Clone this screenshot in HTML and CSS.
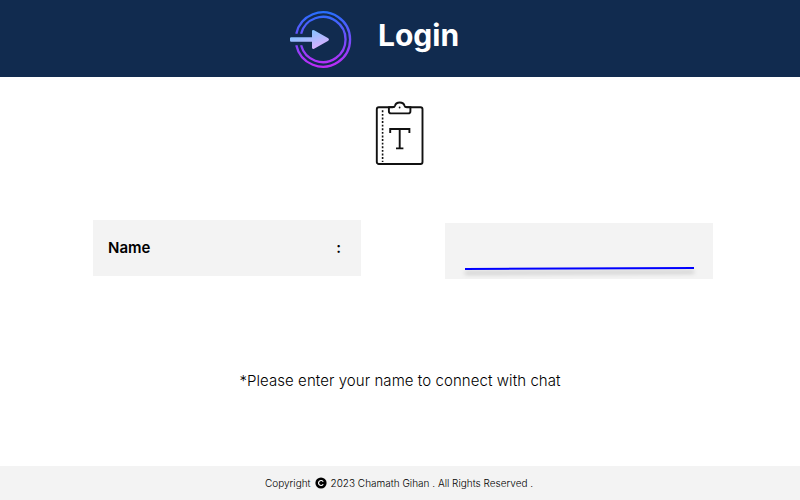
FILE: index.html
```html
<!DOCTYPE html>
<html lang="en">
<head>
<meta charset="utf-8">
<title>Login</title>
<link rel="stylesheet" href="styles.css">
</head>
<body>
<header class="header">
  <svg class="login-icon" width="64" height="60" viewBox="0 0 64 60" fill="none">
    <defs>
      <linearGradient id="ring" gradientUnits="userSpaceOnUse" x1="0" y1="1" x2="0" y2="58">
        <stop offset="0" stop-color="#2470ff"/>
        <stop offset="1" stop-color="#c22af8"/>
      </linearGradient>
      <linearGradient id="arrow" gradientUnits="userSpaceOnUse" x1="24" y1="20" x2="30" y2="39">
        <stop offset="0" stop-color="#83c2ff"/>
        <stop offset="1" stop-color="#dfafff"/>
      </linearGradient>
    </defs>
    <g stroke="url(#ring)" stroke-width="2.3">
      <path d="M8.3 23.7A27.2 27.2 0 1 1 8.3 35.3"/>
      <path d="M13.1 23.7A22.6 22.6 0 1 1 13.1 35.3"/>
    </g>
    <path d="M3.2 27.2H24V21.5Q24 19.4 26.1 20.3L40.3 28.3Q41.7 29.5 40.3 30.7L26.1 38.7Q24 39.6 24 37.5V31.8H3.2Q2 31.8 2 30.6V28.4Q2 27.2 3.2 27.2Z" fill="url(#arrow)"/>
  </svg>
  <h1 class="title">Login</h1>
</header>
<main class="main">
  <svg class="clipboard" width="50" height="66" viewBox="0 0 50 66" fill="none" stroke="#111" stroke-width="1.9">
    <rect x="1.8" y="7.3" width="45.7" height="56.7" rx="2"/>
    <path d="M13.2 7.3H17.5Q19.6 7.3 20 5.8C21 1.3 28.5 1.3 29.5 5.8Q29.9 7.3 31.9 7.3H35.4V11.2Q35.4 13.4 33.2 13.4H16.1Q13.9 13.4 13.9 11.2V7.3" fill="#fff"/>
    <circle cx="24.6" cy="7.5" r=".9" fill="#111" stroke="none"/>
    <path d="M7.6 10.3V62" stroke-width="1.6" stroke-dasharray="1.9 1.7"/>
    <path d="M15.2 33V29H34.4V33M24.7 29V48.2M21 48.4H28.4"/>
  </svg>
  <form class="fields">
    <div class="label"><span>Name</span><span>:</span></div>
    <div class="entry">
      <svg class="underline" width="229" height="4" viewBox="0 0 229 4"><path d="M0 3L229 2" stroke="#00f" stroke-width="2"/></svg>
    </div>
  </form>
  <p class="hint">*Please enter your name to connect with chat</p>
</main>
<footer class="footer">
  <span>Copyright</span>
  <svg class="copy-icon" width="12" height="12" viewBox="0 0 12 12"><circle cx="6" cy="6" r="5.6"/><path d="M8.2 4.7A2.5 2.5 0 1 0 8.2 7.3" fill="none" stroke="#fff" stroke-width="1.2"/></svg>
  <span>2023 Chamath Gihan . All Rights Reserved .</span>
</footer>
</body>
</html>
```
FILE: styles.css
```css
* { box-sizing: border-box; }
body {
  display: flex;
  flex-direction: column;
  height: 500px;
  margin: 0;
  background: #fff;
  color: #000;
  font-family: Inter, sans-serif;
}
.header {
  display: flex;
  align-items: flex-start;
  height: 77px;
  padding-left: 288px;
  background: #112b4f;
}
.login-icon { margin-top: 10px; }
.title {
  margin: 17px 0 0 26px;
  color: #fff;
  font-size: 30px;
  font-weight: 700;
  line-height: 36px;
}
.main {
  display: flex;
  flex: 1;
  flex-direction: column;
  align-items: center;
}
.clipboard { margin-top: 23px; }
.fields {
  display: flex;
  align-items: flex-start;
  gap: 84px;
  width: 620px;
  margin: 54px 0 0 6px;
}
.label, .entry {
  display: flex;
  width: 268px;
  height: 56px;
  background: #f3f3f3;
}
.label {
  align-items: center;
  justify-content: space-between;
  padding: 0 20px 2px 15px;
  font-size: 15px;
  font-weight: 600;
}
.entry {
  margin-top: 3px;
  padding: 43px 0 0 20px;
}
.underline {
  overflow: visible;
  filter: drop-shadow(0 4px 2px rgba(0, 0, 0, .25));
}
.hint {
  margin: 92px 0 0;
  font-size: 15px;
  font-weight: 300;
  line-height: 20px;
  letter-spacing: .07px;
}
.footer {
  display: flex;
  align-items: center;
  height: 34px;
  padding: 0 0 1px 265px;
  background: #f3f3f3;
  font-size: 10px;
  font-weight: 300;
}
.copy-icon { margin: 1px 4px 0 4px; }
```
